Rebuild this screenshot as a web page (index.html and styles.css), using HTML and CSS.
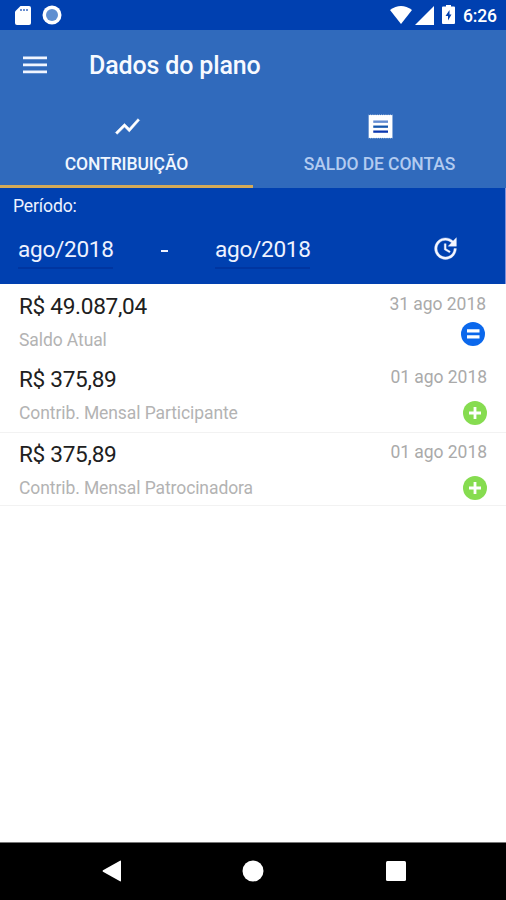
FILE: index.html
```html
<!DOCTYPE html>
<html lang="pt-BR">
<head>
<meta charset="utf-8">
<title>Dados do plano</title>
<link rel="stylesheet" href="styles.css">
</head>
<body>
<div class="screen">
  <div class="status">
    <svg class="sd" width="16" height="19" viewBox="0 0 16 19"><path fill="#fff" d="M5.500 0H14Q16 0 16 2V17Q16 19 14 19H2Q0 19 0 17V5.500Z"/><path fill="#6b8fd0" d="M5 3h2v2H5zM8 3h2v2H8zM11 3h2v2h-2z"/></svg>
    <svg class="sync" width="20" height="20" viewBox="0 0 20 20"><circle cx="10" cy="10" r="9.500" fill="#fff"/><circle cx="10" cy="10" r="6" fill="#5f8fd0"/></svg>
    <svg class="wifi" width="22" height="18" viewBox="0 0 22 18"><path fill="#fff" d="M0 4Q11-4 22 4L11 18Z"/></svg>
    <svg class="signal" width="19" height="19" viewBox="0 0 19 19"><path fill="#fff" d="M19 0V19H0Z"/></svg>
    <svg class="battery" width="13" height="20" viewBox="0 0 13 20"><path fill="#fff" d="M4 0h5v1.500h3q1 0 1 1V18q0 1-1 1H1q-1 0-1-1V2.500q0-1 1-1h3z"/><path fill="#0040b0" d="M7.500 5L3.500 11h2.500v4.500L9.500 9.500H7.500z"/></svg>
    <span class="clock">6:26</span>
  </div>
  <header class="appbar">
    <svg width="24" height="18" viewBox="0 0 24 18"><path fill="#f0f5ff" d="M0 .500h24v2.700H0zM0 7.500h24v2.700H0zM0 14.500h24v2.700H0z"/></svg>
    <h1>Dados do plano</h1>
  </header>
  <nav class="tabs">
    <div class="tab active">
      <svg width="29" height="29" viewBox="0 0 24 24"><path fill="#fff" stroke="#fff" stroke-width=".4" d="M3.500 18.490l6-6.010 4 4L22 6.920l-1.410-1.410-7.090 7.970-4-4L2 16.990z"/></svg>
      <span class="t1">CONTRIBUIÇÃO</span>
    </div>
    <div class="tab">
      <svg width="29" height="29" viewBox="0 0 24 24"><path fill="#fff" d="M2.200 2l.8.600.9-.6.900.6.900-.6.900.6.900-.6.900.6.900-.6.900.6.900-.6.900.6.900-.6.900.6.900-.6.900.6.900-.6.900.6.900-.6.900.6.900-.6.900.6.900-.6V22l-.9-.6-.9.600-.9-.6-.9.600-.9-.6-.9.600-.9-.6-.9.600-.9-.6-.9.600-.9-.6-.9.600-.9-.6-.9.600-.9-.6-.9.600-.9-.6-.9.600-.9-.6-.9.600-.9-.6-.8.600z"/><path fill="#668ed2" d="M6 7h12.200v2H6z"/><path fill="#1658ad" d="M6 11.200h12.200v1.900H6z"/><path fill="#0c38b0" d="M6 15.300h12.200v1.900H6z"/></svg>
      <span class="t2">SALDO DE CONTAS</span>
    </div>
  </nav>
  <section class="filter">
    <div class="label">Período:</div>
    <div class="range">
      <span class="month">ago/2018</span>
      <span class="dash"></span>
      <span class="month">ago/2018</span>
      <svg class="reload" width="29" height="29" viewBox="0 0 24 24"><path fill="#f4f6ff" stroke="#f4f6ff" stroke-width=".3" d="M21 10.120h-6.780l2.740-2.820c-2.730-2.700-7.150-2.800-9.880-.100-2.730 2.710-2.730 7.080 0 9.790s7.150 2.710 9.880 0C18.320 15.650 19 14.080 19 12.100h2c0 1.980-.880 4.550-2.640 6.290-3.510 3.480-9.210 3.480-12.720 0-3.500-3.470-3.530-9.110-.020-12.580s9.140-3.470 12.650 0L21 3v7.120zM12.500 8v4.250l3.500 2.080-.720 1.210L11 13V8h1.500z"/></svg>
    </div>
  </section>
  <main class="list">
    <article class="row first">
      <div class="info"><div class="amount a1">R$ 49.087,04</div><div class="desc d1">Saldo Atual</div></div>
      <div class="side"><div class="date">31 ago 2018</div>
        <svg width="24" height="24" viewBox="0 0 24 24"><circle cx="12" cy="12" r="12" fill="#0b68ec"/><path fill="#fff" d="M6 7.300h12.500v3.200H6zM6 13.300h12.500v3.200H6z"/></svg></div>
    </article>
    <article class="row">
      <div class="info"><div class="amount a2">R$ 375,89</div><div class="desc d2">Contrib. Mensal Participante</div></div>
      <div class="side"><div class="date">01 ago 2018</div>
        <svg width="24" height="24" viewBox="0 0 24 24"><circle cx="12" cy="12" r="12" fill="#86dc50"/><path fill="#fff" d="M10.600 6h2.800v4.600H18v2.800h-4.600V18h-2.800v-4.600H6v-2.800h4.600z"/></svg></div>
    </article>
    <article class="row last">
      <div class="info"><div class="amount a2">R$ 375,89</div><div class="desc d3">Contrib. Mensal Patrocinadora</div></div>
      <div class="side"><div class="date">01 ago 2018</div>
        <svg width="24" height="24" viewBox="0 0 24 24"><circle cx="12" cy="12" r="12" fill="#86dc50"/><path fill="#fff" d="M10.600 6h2.800v4.600H18v2.800h-4.600V18h-2.800v-4.600H6v-2.800h4.600z"/></svg></div>
    </article>
  </main>
  <footer class="navbar">
    <svg width="20" height="22" viewBox="0 0 20 22"><path fill="#fff" d="M18 .700Q19 .200 19 1.500V20.500Q19 21.800 18 21.300L1 11.800Q0 11 1 10.200Z"/></svg>
    <svg width="22" height="22" viewBox="0 0 22 22"><circle cx="11" cy="11" r="10.500" fill="#fff"/></svg>
    <svg width="20" height="20" viewBox="0 0 20 20"><rect width="20" height="20" rx="1.500" fill="#fff"/></svg>
  </footer>
</div>
</body>
</html>
```
FILE: styles.css
```css
* { box-sizing: border-box; }
body { margin: 0; font-family: Roboto, "Liberation Sans", sans-serif; background: #fff; }
svg { display: block; flex: none; }
.screen { width: 506px; height: 900px; display: flex; flex-direction: column; overflow: hidden; }
.status { height: 30px; flex: none; background: #0040b0; display: flex; align-items: center; padding: 0 0 0 15px; }
.sync { margin-left: 11px; }
.wifi { margin-left: 328px; }
.signal { margin-left: 3px; }
.battery { margin-left: 8px; }
.clock { margin: 2px 0 0 8px; color: #fff; font-size: 17.5px; letter-spacing: -.2px; font-weight: 500; line-height: 28px; white-space: nowrap; }
.appbar { height: 70px; flex: none; background: #306abc; display: flex; align-items: center; padding: 0 0 0 23px; }
.appbar svg { margin-top: -1px; }
h1 { margin: 2px 0 0 42px; font-size: 25px; letter-spacing: -.15px; line-height: 30px; font-weight: 500; color: #f7faff; white-space: nowrap; }
.tabs { height: 88px; flex: none; background: #306abc; display: grid; grid-template-columns: 1fr 1fr; }
.tab { display: flex; flex-direction: column; align-items: center; padding-top: 12px; color: #b2cbf0; font-size: 17.5px; letter-spacing: -.1px; line-height: 20px; font-weight: 500; white-space: nowrap; }
.tab svg { margin-left: 1px; }
.tab span { margin-top: 13px; }
.tab.active { color: #f0f6ff; border-bottom: 3px solid #d4aa58; }
.filter { height: 96px; flex: none; background: #0040b0; color: #eef2ff; border-right: 1px solid #8090dc; }
.label { padding: 8px 0 0 13px; font-size: 17.6px; letter-spacing: -.15px; line-height: 21px; }
.range { display: flex; align-items: flex-start; padding: 15px 0 0 18px; }
.month { width: 95px; height: 37px; font-size: 22.6px; letter-spacing: -.3px; line-height: 35px; white-space: nowrap; border-bottom: 2px solid #0035a0; }
.dash { width: 7px; height: 2px; margin: 18px 47px 0 48px; background: #eef2ff; }
.month + .reload { margin: 2px 0 0 121px; }
.list { flex: 1; background: #fff; }
.row { height: 75px; display: flex; justify-content: space-between; padding: 7px 19px 0 19px; border-bottom: 1px solid #f2f2f2; }
.row.first { height: 74px; padding-right: 20px; border: 0; padding-top: 8px; }
.row.last { height: 73px; }
.amount { font-size: 22.6px; letter-spacing: -.3px; line-height: 30px; color: #202020; white-space: nowrap; }
.desc { margin-top: 6px; font-size: 17.5px; letter-spacing: -.09px; line-height: 25px; color: #b3b3b3; white-space: nowrap; }
.side { display: flex; flex-direction: column; align-items: flex-end; }
.date { font-size: 17.5px; letter-spacing: -.04px; line-height: 24px; color: #aaa; white-space: nowrap; }
.side svg { margin-top: 12px; }
.first .side svg { margin: 6px 1px 0 0; }
.navbar { height: 58px; flex: none; background: #000; border-top: 1px solid #777; display: flex; align-items: center; padding: 0 0 2px 102px; }
.navbar svg:nth-child(2) { margin-left: 120px; }
.navbar svg:nth-child(3) { margin-left: 122px; }
```
